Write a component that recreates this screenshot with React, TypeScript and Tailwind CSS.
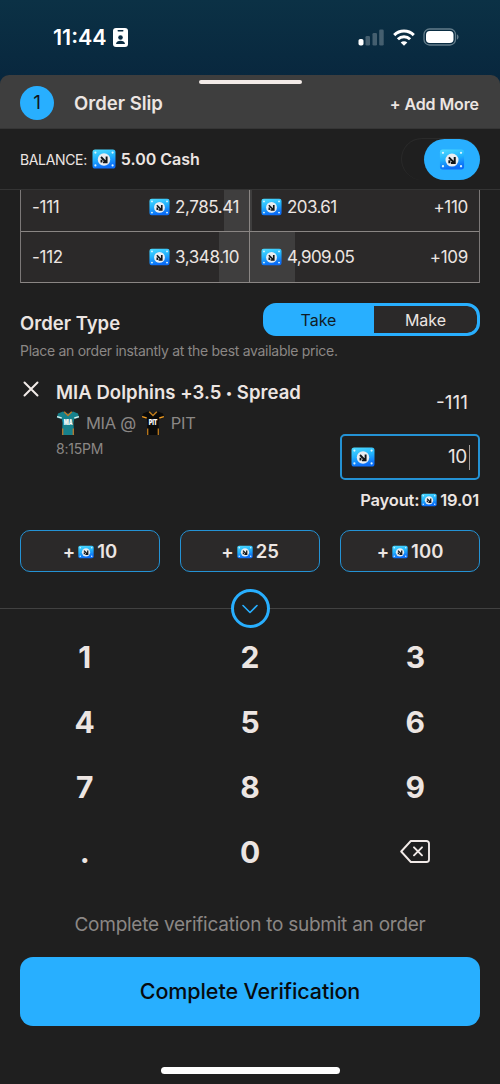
import clsx from "clsx";

const quickAmounts = ["10", "25", "100"];
const keys = ["1", "2", "3", "4", "5", "6", "7", "8", "9", ".", "0"];

const orderBook = [
  {
    left: "-111",
    leftAmount: "2,785.41",
    rightAmount: "203.61",
    right: "+110",
    leftDepth: 25,
    rightDepth: 2,
  },
  {
    left: "-112",
    leftAmount: "3,348.10",
    rightAmount: "4,909.05",
    right: "+109",
    leftDepth: 30,
    rightDepth: 45,
  },
];

function CashIcon({ className }: { className?: string }) {
  return (
    <svg viewBox="0 0 24 20" className={clsx("shrink-0", className)}>
      <defs>
        <linearGradient id="cash" x1="0" y1="0" x2="0.25" y2="1">
          <stop offset="0" stopColor="#4fdcff" />
          <stop offset="0.5" stopColor="#22b4fd" />
          <stop offset="1" stopColor="#0a6cf8" />
        </linearGradient>
      </defs>
      <rect x="0.5" y="0.5" width="23" height="19" rx="2.6" fill="url(#cash)" />
      <g fill="#d8f6ff">
        <circle cx="3.4" cy="3.6" r="1.1" />
        <circle cx="20.6" cy="3.6" r="1.1" />
        <circle cx="3.4" cy="16.4" r="1.1" />
        <circle cx="20.6" cy="16.4" r="1.1" />
      </g>
      <circle cx="12" cy="10.5" r="6.2" fill="#e9edf1" />
      <path
        d="M9.500 13.500v-2.800M9 8l4.600 4.600M14.600 7.600v5.800h-3.600"
        fill="none"
        stroke="#101418"
        strokeWidth="1.9"
      />
    </svg>
  );
}

function Jersey({ team, body, trim, sleeve }: { team: string; body: string; trim: string; sleeve: string }) {
  return (
    <svg viewBox="0 0 24 24" className="h-6 w-6 shrink-0">
      <path d="M7 0.500 2 2.500 0.800 6.700l4.900 1.300.8 4-.6 12h12.200l-.6-12 .8-4 4.900-1.300L22 2.500 17 0.500l-5 2.200z" fill={body} />
      <path d="M1.100 5.700 5.700 7M22.900 5.700 18.300 7" stroke={sleeve} strokeWidth="1.300" />
      <path d="M8.200 0.700 12 4.500l3.800-3.800" fill="none" stroke={trim} strokeWidth="1.500" />
      <path d="M6.700 17.500V24M17.300 17.500V24" stroke={trim} strokeWidth="1.300" />
      <text
        x="12"
        y="14"
        textAnchor="middle"
        textLength="8.500"
        lengthAdjust="spacingAndGlyphs"
        fontSize="7.500"
        fontWeight="900"
        fill="#fff"
      >
        {team}
      </text>
    </svg>
  );
}

function StatusBar() {
  return (
    <div className="flex h-[87px] shrink-0 items-start justify-between bg-linear-to-b from-[#0b3145] to-[#08263d] pr-[41px] pl-[53px]">
      <div className="mt-[23px] flex h-7 items-center gap-[6px]">
        <span className="text-[21.500px] font-semibold text-white">11:44</span>
        <svg viewBox="0 0 15 19" className="h-[19px] w-[15px]">
          <rect width="15" height="19" rx="3" fill="#fff" />
          <rect x="4.500" y="2" width="6" height="1.400" rx="0.700" fill="#0a2c42" />
          <circle cx="7.500" cy="9.500" r="2.300" fill="#0a2c42" />
          <path d="M3 16c.3-2.300 2-3.200 4.500-3.200s4.200.9 4.500 3.200z" fill="#0a2c42" />
        </svg>
      </div>
      <div className="mt-[28px] flex h-[18px] items-center gap-[8px]">
        <svg viewBox="0 0 27 17" className="h-[17px] w-[27px]">
          <rect x="0.500" y="10" width="5" height="6.500" rx="1.800" fill="#fff" />
          <g fill="#fff" opacity="0.240">
            <rect x="7.500" y="7" width="4.500" height="9.500" rx="1.300" />
            <rect x="14.500" y="4" width="4.500" height="12.500" rx="1.300" />
            <rect x="21.200" y="0.500" width="4.500" height="16" rx="1.300" />
          </g>
        </svg>
        <svg viewBox="0 0 22 17" className="h-[17px] w-[22px]" fill="none" stroke="#fff" strokeWidth="3">
          <path d="M1.200 6.100a14 14 0 0 1 19.600 0" />
          <path d="M4.900 10.200a8.700 8.700 0 0 1 12.200 0" />
          <path d="M11 16.800l-3.300-3.300a4.700 4.700 0 0 1 6.600 0z" fill="#fff" stroke="none" />
        </svg>
        <svg viewBox="0 0 36 18" className="h-[18px] w-[36px]">
          <rect x="1" y="1" width="31.500" height="16" rx="5.500" fill="none" stroke="#637c8a" strokeWidth="1.300" />
          <rect x="3" y="3" width="27.500" height="12" rx="3.800" fill="#fff" />
          <path d="M34 6.500c2 .6 2 4.400 0 5z" fill="#637c8a" />
        </svg>
      </div>
    </div>
  );
}

function SheetHeader() {
  return (
    <div className="-mt-3 flex h-[54px] shrink-0 flex-col rounded-t-[9px] border-b border-[#353535] bg-[#3e3e3e]">
      <div className="mx-auto mt-[5px] h-1 w-[103px] shrink-0 rounded-full bg-[#f2ebe8]" />
      <div className="flex items-center pt-[2px] pr-[21px] pl-[20px]">
        <span className="flex size-[34px] items-center justify-center rounded-full bg-[#28afff] pt-px text-[19px] text-[#10181e]">
          1
        </span>
        <h1 className="ml-5 pt-[2px] text-[18.500px] font-semibold">Order Slip</h1>
        <button className="ml-auto pt-px text-[16px] font-semibold tracking-[-0.1px]">+ Add More</button>
      </div>
    </div>
  );
}

function Balance() {
  return (
    <div className="flex h-[61px] shrink-0 items-center border-b border-[#343434] px-5">
      <span className="text-[14px] tracking-[-0.35px]">BALANCE:</span>
      <CashIcon className="ml-[5px] h-5 w-6" />
      <span className="ml-[5px] text-[16px] font-semibold">5.00 Cash</span>
      <div className="ml-auto flex h-[42px] w-[79px] justify-end rounded-full border-t border-l border-[#2a2a2a]">
        <div className="flex h-[41px] w-14 items-center justify-center rounded-full bg-[#28afff]">
          <CashIcon className="h-[21px] w-[26px]" />
        </div>
      </div>
    </div>
  );
}

function OrderBook() {
  return (
    <div className="mx-5 shrink-0 border-x border-[#7c7877] bg-[#2b2929] text-[17px] tracking-[-0.3px]">
      {orderBook.map((row, i) => (
        <div key={row.left} className={clsx("grid grid-cols-2 border-b border-[#8a8684]", i === 0 ? "h-[42px]" : "h-[51px]")}>
          <div className={clsx("relative flex items-center justify-between border-r border-[#8a8684] pr-[10px] pl-[11px]", i === 0 ? "pb-[6px]" : "pt-[2px]")}>
            <div className="absolute inset-y-0 right-0 bg-[#3f3e3e]" style={{ width: row.leftDepth }} />
            <span className="relative">{row.left}</span>
            <span className="relative flex items-center gap-[5px] tracking-[-0.4px]">
              <CashIcon className="-mt-[2px] h-[18px] w-[21px]" />
              {row.leftAmount}
            </span>
          </div>
          <div className={clsx("relative flex items-center justify-between pr-[11px] pl-[11px]", i === 0 ? "pb-[6px]" : "pt-[2px]")}>
            <div className="absolute inset-y-0 left-0 bg-[#3f3e3e]" style={{ width: row.rightDepth }} />
            <span className="relative flex items-center gap-[5px] tracking-[-0.6px]">
              <CashIcon className="-mt-[2px] h-[18px] w-[21px]" />
              {row.rightAmount}
            </span>
            <span className="relative">{row.right}</span>
          </div>
        </div>
      ))}
    </div>
  );
}

function OrderType() {
  return (
    <div className="mt-[20px] shrink-0 px-5">
      <div className="flex h-[33px] items-center justify-between">
        <h2 className="pt-[8px] text-[18.5px] font-semibold">Order Type</h2>
        <div className="flex h-[33px] w-[217px] overflow-hidden rounded-[13px] border-[3px] border-[#28afff] bg-[#28afff] text-[16px]">
          <button className="w-[108px] pr-[3px] text-[#101c26]">Take</button>
          <button className="flex-1 rounded-r-[9px] bg-[#2b2929]">Make</button>
        </div>
      </div>
      <p className="mt-[5px] text-[14px] leading-5 tracking-[-0.29px] text-[#8b8785]">
        Place an order instantly at the best available price.
      </p>
    </div>
  );
}

function Selection() {
  return (
    <div className="mt-[19px] flex h-[134px] shrink-0 px-5">
      <svg viewBox="0 0 16 16" className="mt-px ml-[3px] size-4 shrink-0" stroke="#f2ebe8" strokeWidth="2" strokeLinecap="round">
        <path d="M1.500 1.500l13 13M14.500 1.500l-13 13" />
      </svg>
      <div className="ml-[17px]">
        <h3 className="text-[18.5px] leading-6 font-semibold tracking-[0.04px] whitespace-nowrap">
          MIA Dolphins +3.5 <span className="align-[2px] text-[12px]">•</span> Spread
        </h3>
        <div className="mt-[6px] flex h-6 items-center text-[16.500px] tracking-[-0.300px] text-[#8b8785]">
          <Jersey team="MIA" body="#16818c" trim="#b9772b" sleeve="#dcefed" />
          <span className="ml-[6px]">MIA @</span>
          <span className="ml-[5px] flex">
            <Jersey team="PIT" body="#0a0a0a" trim="#bd7a1c" sleeve="#ee9a20" />
          </span>
          <span className="ml-[6px]">PIT</span>
        </div>
        <p className="mt-[4px] text-[14px] leading-5 tracking-[-0.2px] text-[#8b8785]">8:15PM</p>
      </div>
      <div className="ml-auto flex w-[140px] flex-col items-end">
        <span className="mt-[11px] pr-[12px] text-[19px] leading-6">-111</span>
        <div className="mt-[19px] flex h-[46px] w-full items-center justify-between rounded-[5px] border-2 border-[#2492d4] pr-[8px] pl-[9px]">
          <CashIcon className="h-5 w-6" />
          <span className="flex items-center pt-px text-[19px] tracking-[-0.3px]">
            10
            <span className="ml-[2px] h-[25px] w-px bg-[#a19c99]" />
          </span>
        </div>
        <p className="mt-[10px] flex items-center pr-px text-[16.500px] leading-5 font-semibold tracking-[-0.2px]">
          Payout:
          <CashIcon className="mr-[3px] ml-[2px] h-[14px] w-[16px]" />
          19.01
        </p>
      </div>
    </div>
  );
}

function QuickAmounts() {
  return (
    <div className="mt-[16px] grid shrink-0 grid-cols-3 gap-5 px-5">
      {quickAmounts.map((amount) => (
        <button
          key={amount}
          className="flex h-[42px] items-center justify-center rounded-[10px] border-[1.500px] border-[#2492d4] bg-[#2b2929] pt-px text-[18.500px] font-semibold"
        >
          +
          <CashIcon className="mr-[3px] ml-[3px] h-[14px] w-[16px]" />
          {amount}
        </button>
      ))}
    </div>
  );
}

function Keypad() {
  return (
    <>
      <div className="mt-[17px] flex shrink-0 items-center">
        <div className="h-px flex-1 bg-[#414141]" />
        <button className="flex size-[39px] items-center justify-center rounded-full border-3 border-[#28afff]">
          <svg viewBox="0 0 16 10" className="h-[10px] w-4" fill="none" stroke="#28afff" strokeWidth="1.600" strokeLinecap="round" strokeLinejoin="round">
            <path d="M1 1.500l7 7 7-7" />
          </svg>
        </button>
        <div className="h-px flex-1 bg-[#414141]" />
      </div>
      <div className="mt-[-3px] grid shrink-0 auto-rows-[65px] grid-cols-3 px-[2px] text-[30px] font-bold">
        {keys.map((key) => (
          <button key={key} className="flex items-center justify-center pb-px">
            {key}
          </button>
        ))}
        <button className="flex items-center justify-center pb-[2px]">
          <svg viewBox="0 0 30 23" className="h-[23px] w-[30px]" fill="none" stroke="#f2ebe8" strokeWidth="1.900" strokeLinecap="round" strokeLinejoin="round">
            <path d="M10.800 1h15.700a2.500 2.500 0 0 1 2.500 2.500v16a2.500 2.500 0 0 1-2.500 2.500H10.800L1.200 11.500z" />
            <path d="M14 7.300l8 8M22 7.300l-8 8" />
          </svg>
        </button>
      </div>
    </>
  );
}

export default function App() {
  return (
    <div className="flex h-[1084px] w-[500px] flex-col overflow-hidden bg-[#1f1f1f] font-['Inter',sans-serif] text-[#ece5e2]">
      <StatusBar />
      <SheetHeader />
      <Balance />
      <OrderBook />
      <OrderType />
      <Selection />
      <QuickAmounts />
      <Keypad />
      <p className="mt-[26px] text-center text-[19px] leading-7 tracking-[-0.25px] text-[#8b8785]">
        Complete verification to submit an order
      </p>
      <button className="mx-5 mt-[18px] h-[69px] shrink-0 rounded-[13px] bg-[#28afff] text-[21.500px] font-medium tracking-[-0.1px] text-[#070b0e]">
        Complete Verification
      </button>
      <div className="mx-auto mt-[41px] h-[7px] w-[179px] shrink-0 rounded-full bg-white" />
    </div>
  );
}
